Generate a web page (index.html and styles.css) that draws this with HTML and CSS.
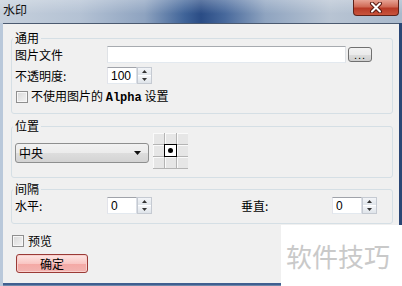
FILE: index.html
```html
<!DOCTYPE html>
<html lang="zh">
    <head>
        <meta charset="UTF-8" />
        <title>水印</title>
        <link rel="stylesheet" href="styles.css">
    </head>
    <body>
        <div class="window">
            <div class="titlebar">
                <span class="title">水印</span>
                <span class="close">
                    <svg width="14" height="11" viewBox="0 0 14 11">
                        <path d="M3 1.5 L11 9.5 M11 1.5 L3 9.5" stroke="#5a1a12" stroke-width="4" stroke-linecap="round" />
                        <path d="M3 1.5 L11 9.5 M11 1.5 L3 9.5" stroke="#fff" stroke-width="2" stroke-linecap="round" />
                    </svg>
                </span>
            </div>
            <div class="client">
                <fieldset class="group">
                    <legend>通用</legend>
                    <div class="group-body">
                        <div class="row">
                            <span class="label">图片文件</span>
                            <input class="field file-field" type="text" />
                            <button class="browse" type="button">...</button>
                        </div>
                        <div class="row">
                            <span class="label">不透明度:</span>
                            <div class="spin">
                                <input class="field spin-field" type="text" value="100" />
                                <span class="spin-btns">
                                    <span class="spin-btn"><svg width="5" height="3"><path d="M0 3 L2.5 0 L5 3Z" fill="#333" /></svg></span>
                                    <span class="spin-btn"><svg width="5" height="3"><path d="M0 0 L2.5 3 L5 0Z" fill="#333" /></svg></span>
                                </span>
                            </div>
                        </div>
                        <div class="row check-row">
                            <span class="checkbox"></span>
                            <span>不使用图片的 <span class="mono">Alpha</span> 设置</span>
                        </div>
                    </div>
                </fieldset>

                <fieldset class="group group-pos">
                    <legend>位置</legend>
                    <div class="pos-body">
                        <div class="select">
                            <span>中央</span>
                            <svg width="7" height="4"><path d="M0 0 L7 0 L3.5 4Z" fill="#111" /></svg>
                        </div>
                        <div class="pos-grid">
                            <span class="cell"></span><span class="cell"></span><span class="cell"></span>
                            <span class="cell"></span><span class="cell active"><i class="dot"></i></span><span class="cell"></span>
                            <span class="cell"></span><span class="cell"></span><span class="cell"></span>
                        </div>
                    </div>
                </fieldset>

                <fieldset class="group group-gap">
                    <legend>间隔</legend>
                    <div class="group-body">
                        <div class="row">
                            <span class="label">水平:</span>
                            <div class="spin">
                                <input class="field spin-field" type="text" value="0" />
                                <span class="spin-btns">
                                    <span class="spin-btn"><svg width="5" height="3"><path d="M0 3 L2.5 0 L5 3Z" fill="#333" /></svg></span>
                                    <span class="spin-btn"><svg width="5" height="3"><path d="M0 0 L2.5 3 L5 0Z" fill="#333" /></svg></span>
                                </span>
                            </div>
                            <span class="label label-right">垂直:</span>
                            <div class="spin">
                                <input class="field spin-field" type="text" value="0" />
                                <span class="spin-btns">
                                    <span class="spin-btn"><svg width="5" height="3"><path d="M0 3 L2.5 0 L5 3Z" fill="#333" /></svg></span>
                                    <span class="spin-btn"><svg width="5" height="3"><path d="M0 0 L2.5 3 L5 0Z" fill="#333" /></svg></span>
                                </span>
                            </div>
                        </div>
                    </div>
                </fieldset>

                <div class="preview-row">
                    <span class="checkbox"></span>
                    <span>预览</span>
                </div>
                <button class="ok" type="button">确定</button>
            </div>
            <div class="watermark">软件技巧</div>
        </div>
    </body>
</html>
```

FILE: styles.css
```css
* {
    box-sizing: border-box;
}
body {
    margin: 0;
    font-family: "Noto Sans CJK SC", "Liberation Sans", sans-serif;
    font-size: 12px;
    line-height: 14px;
    color: #000;
}
.window {
    position: relative;
    width: 402px;
    height: 286px;
    overflow: hidden;
    display: flex;
    flex-direction: column;
    background: linear-gradient(to right, #b9c8da 0, #b9c8da 3px, #6f88aa 3px, #6f88aa 399px, #2a4675 399px);
}
.titlebar {
    height: 23px;
    display: flex;
    justify-content: space-between;
    align-items: flex-start;
    background:
        linear-gradient(to bottom, rgba(255, 255, 255, 0.25), rgba(255, 255, 255, 0) 60%),
        linear-gradient(to right, #c6d0dc 0%, #b4c2d4 20%, #8ea3c0 36%, #3f6398 46%, #2a4c85 50%, #48699c 56%, #8fa4c0 66%, #b8c4d3 82%, #a9b9cc 100%);
}
.title {
    padding: 3px 0 0 3px;
    color: #111;
}
.close {
    width: 46px;
    height: 16px;
    margin-right: 3px;
    display: flex;
    justify-content: center;
    align-items: center;
    border: 1px solid #5e2219;
    border-top: none;
    border-radius: 0 0 4px 4px;
    background: linear-gradient(to bottom, #e7a394 0%, #d06a56 45%, #b83a26 55%, #c9543c 100%);
}
.client {
    margin: 0 3px;
    height: 262px;
    border-top: 1px solid #4b5a70;
    border-bottom: 2px solid #3f5f90;
    background: #f0f0f0;
    display: flex;
    flex-direction: column;
    align-items: flex-start;
}
.group {
    align-self: stretch;
    margin: 7px 6px 0 8px;
    padding: 0 6px 8px 3px;
    min-width: 0;
    border: 1px solid #d5dfe5;
    border-radius: 3px;
}
.group legend {
    padding: 0 2px;
    margin-left: -2px;
    line-height: 14px;
}
.group-pos {
    margin-top: 5px;
}
.group-gap {
    margin-top: 4px;
    padding-bottom: 9px;
}
.group-body {
    display: flex;
    flex-direction: column;
    gap: 4px;
    padding-top: 1px;
}
.row {
    display: flex;
    align-items: center;
    height: 17px;
}
.check-row {
    gap: 3px;
    padding-left: 1px;
}
.label {
    width: 92px;
    flex: none;
}
.label-right {
    margin-left: 89px;
    width: 91px;
}
.field {
    height: 17px;
    margin: 0;
    padding: 0 3px;
    font-family: "Liberation Sans", sans-serif;
    font-size: 12px;
    color: #000;
    background: #fff;
    border: 1px solid #abadb3;
    border-top-color: #a0a3aa;
    border-left-color: #e2e3ea;
    border-right-color: #dbdfe6;
    border-bottom-color: #e3e9ef;
    outline: none;
}
.file-field {
    width: 239px;
    border-color: #a7abb0 #dfe2e6 #e3e9ef #dfe2e6;
}
.browse {
    width: 24px;
    height: 15px;
    margin-left: 2px;
    padding: 0;
    font-size: 11px;
    line-height: 10px;
    letter-spacing: 1px;
    border: 1px solid #707070;
    border-radius: 3px;
    background: linear-gradient(to bottom, #f2f2f2 0%, #ebebeb 50%, #dddddd 51%, #cfcfcf 100%);
}
.spin {
    display: flex;
    height: 17px;
}
.spin-field {
    width: 30px;
}
.spin-btns {
    width: 15px;
    display: flex;
    flex-direction: column;
    gap: 1px;
    border: 1px solid #c5cad2;
    background: #fff;
}
.spin-btn {
    flex: 1;
    display: flex;
    justify-content: center;
    align-items: center;
    background: linear-gradient(to bottom, #f3f5f8, #dfe4ea);
}
.checkbox {
    width: 12px;
    height: 12px;
    flex: none;
    border: 1px solid #8f8f8f;
    background: linear-gradient(135deg, #d8d8d8, #f4f4f4);
    box-shadow: inset 0 0 0 1px #f7f7f7;
}
.mono {
    font-family: "Liberation Mono", monospace;
    font-weight: bold;
    font-size: 12px;
}
.pos-body {
    display: flex;
    align-items: flex-start;
}
.select {
    width: 134px;
    height: 20px;
    margin-top: 10px;
    padding: 0 7px 0 3px;
    display: flex;
    justify-content: space-between;
    align-items: center;
    border: 1px solid #8e8f8f;
    border-radius: 3px;
    background: linear-gradient(to bottom, #f2f2f2 0%, #ebebeb 50%, #dddddd 51%, #d3d3d3 100%);
}
.pos-grid {
    margin-left: 4px;
    display: grid;
    grid-template-columns: repeat(3, 11px);
    grid-template-rows: repeat(3, 11px);
    gap: 1px;
    padding: 0 0 1px 0;
    background: #b4b4b4;
}
.cell {
    background: #e6e6e6;
    border-top: 1px solid #fafafa;
    border-left: 1px solid #fafafa;
}
.cell.active {
    display: flex;
    justify-content: center;
    align-items: center;
    margin: -1px;
    border: 1px solid #000;
    background: #fff;
    position: relative;
}
.dot {
    width: 5px;
    height: 5px;
    border-radius: 50%;
    background: #000;
}
.preview-row {
    display: flex;
    align-items: center;
    gap: 4px;
    margin: 10px 0 0 9px;
    height: 13px;
}
.ok {
    width: 72px;
    height: 19px;
    margin: 7px 0 0 13px;
    padding: 0;
    font-family: "Noto Sans CJK SC", sans-serif;
    font-size: 12px;
    line-height: 14px;
    color: #000;
    border: 1px solid #9a3a36;
    border-radius: 3px;
    background: linear-gradient(to bottom, #fde6e4 0%, #f9c6c3 50%, #f4a8a4 51%, #f2b4b1 100%);
    box-shadow: inset 0 0 0 1px #f8d0cd;
}
.watermark {
    position: absolute;
    right: 0;
    bottom: 0;
    width: 121px;
    height: 61px;
    padding-left: 5px;
    display: flex;
    align-items: center;
    background: #fff;
    color: #c9c9c9;
    font-size: 26px;
    line-height: 30px;
    letter-spacing: 0px;
}
```
